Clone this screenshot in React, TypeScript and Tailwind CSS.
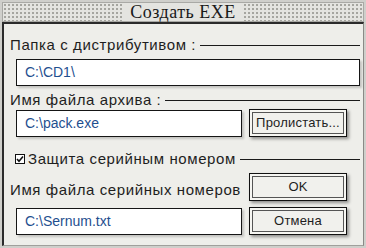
import React from "react";

const label = "text-[15px] leading-[16px] tracking-[0.6px] text-[#1e1e1e] whitespace-nowrap";
const field =
  "h-[27px] bg-white border border-[#151515] shadow-[2px_2px_2px_rgba(0,0,0,0.18)] flex items-center pl-[8px] text-[14px] text-[#1f4f8f]";

const Legend = ({ children }: { children: React.ReactNode }) => (
  <div className="flex items-center gap-[4px]">
    <div className={label}>{children}</div>
    <div className="flex-1 h-px bg-[#1a1a1a]" />
  </div>
);

const Btn = ({ children }: { children: React.ReactNode }) => (
  <button className="w-[98px] h-[28px] shrink-0 border border-[#111] p-[2px] bg-[#f6f6f2] shadow-[2px_2px_3px_rgba(0,0,0,0.4)]">
    <span className="flex h-full items-center justify-center border border-[#555] bg-[#f1f1ed] text-[13px] tracking-[0.2px] text-[#1e1e1e]">
      {children}
    </span>
  </button>
);

export default function App() {
  return (
    <div
      className="w-[366px] h-[248px] bg-[#cfcfcb] p-[2px] flex flex-col"
      style={{ fontFamily: '"Liberation Sans", Arial, sans-serif' }}
    >
      {/* Title */}
      <div className="h-[20px] border border-[#a9a9a5] bg-[#e4e4e0] bg-[radial-gradient(circle,#a4a49e_0.7px,transparent_1px)] bg-size-[4px_4px] flex items-center justify-center">
        <span
          className="bg-[#e4e4e0] px-[6px] text-[18px] leading-[18px] tracking-[0.5px] text-[#1a1a1a]"
          style={{ fontFamily: '"Liberation Serif", "Times New Roman", serif' }}
        >
          Создать EXE
        </span>
      </div>

      {/* Body */}
      <div className="flex-1 border-t-2 border-l-2 border-[#2b2b2b] border-r border-r-[#8a8a86] border-b border-b-[#a0a09c] bg-[#eeeeea] pl-[6px] pr-[3px] pt-[13px]">
        <Legend>Папка с дистрибутивом :</Legend>
        <div className={`${field} ml-[6px] mt-[6px]`}>{"C:\\CD1\\"}</div>

        <div className="mt-[6px]">
          <Legend>Имя файла архива :</Legend>
        </div>
        <div className="flex items-center gap-[7px] ml-[6px] mt-[1px]">
          <div className={`${field} w-[226px] h-[26px]`}>{"C:\\pack.exe"}</div>
          <Btn>Пролистать...</Btn>
        </div>

        <div className="mt-[14px] ml-[5px]">
          <Legend>
            <span className="inline-flex items-center gap-[2px]">
              <svg width="10" height="10" viewBox="0 0 10 10" className="mr-[1px]">
                <rect x="0.5" y="0.5" width="9" height="9" fill="#fff" stroke="#111" />
                <path d="M2 5 L4 7.3 L8 2.5" fill="none" stroke="#111" strokeWidth="1.6" />
              </svg>
              Защита серийным номером
            </span>
          </Legend>
        </div>

        <div className="flex items-end gap-[7px] mt-[6px]">
          <div className={`${label} w-[232px] shrink-0 pb-[3px]`}>Имя файла серийных номеров</div>
          <Btn>OK</Btn>
        </div>
        <div className="flex items-center gap-[7px] ml-[6px] mt-[6px]">
          <div className={`${field} w-[226px] h-[26px]`}>{"C:\\Sernum.txt"}</div>
          <Btn>Отмена</Btn>
        </div>
      </div>
    </div>
  );
}
